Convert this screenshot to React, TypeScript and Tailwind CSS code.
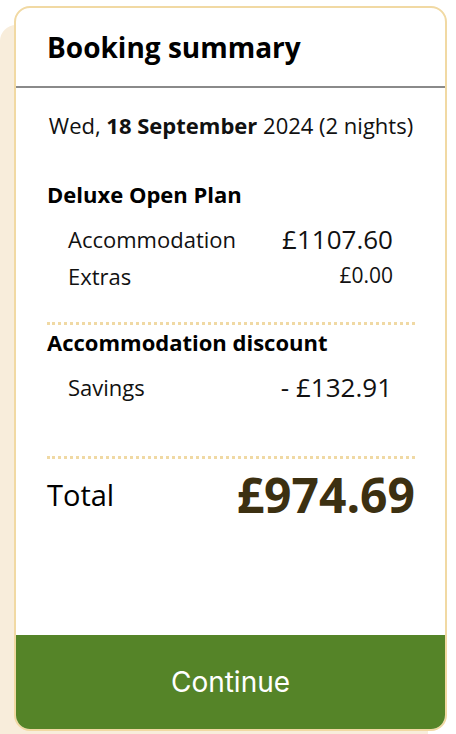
import React from 'react';

const font = { fontFamily: '"Open Sans", "Noto Sans", sans-serif' };

const Row: React.FC<{ label: string; value: string; valueClass: string; className?: string }> = ({ label, value, valueClass, className }) => (
  <div className={`flex items-center justify-between pl-[21px] pr-[22px] ${className ?? ''}`}>
    <span className="text-[22px] text-[#111]">{label}</span>
    <span className={`text-[#111] ${valueClass}`}>{value}</span>
  </div>
);

export default function App() {
  return (
    <div className="relative w-[456px] h-[734px] overflow-hidden bg-white" style={font}>
      {/* beige backdrop behind the card */}
      <div className="absolute left-0 top-[25px] bottom-0 w-[428px] rounded-tl-[16px] bg-[#f8eddb]" />

      <div className="relative ml-[14px] mt-[6px] w-[433px] h-[725px] flex flex-col overflow-hidden rounded-[16px] border-2 border-[#f1d9a3] bg-white">
        {/* Header */}
        <div className="h-[80px] flex items-center px-[31px] border-b-2 border-[#8a8a8a]">
          <h2 className="text-[28px] leading-[36px] font-bold text-black">Booking summary</h2>
        </div>

        <div className="flex-1 px-[31px] pr-[30px]">
          <p className="mt-[23px] text-[22px] leading-[28px] text-[#111] text-center whitespace-nowrap">
            Wed, <b>18 September</b> 2024 (2 nights)
          </p>

          <h3 className="mt-[41px] text-[22px] leading-[28px] font-bold text-black">Deluxe Open Plan</h3>
          <Row className="mt-[14px] h-[34px]" label="Accommodation" value="£1107.60" valueClass="text-[26px]" />
          <Row className="mt-[5px] h-[30px]" label="Extras" value="£0.00" valueClass="text-[21px]" />

          <div className="mt-[31px] border-t-[3px] border-dotted border-[#f0d9a4]" />

          <h3 className="mt-[3px] text-[22px] leading-[28px] font-bold text-black">Accommodation discount</h3>
          <Row className="mt-[14px] h-[34px]" label="Savings" value="- £132.91" valueClass="text-[26px] pr-[1px]" />

          <div className="mt-[52px] border-t-[3px] border-dotted border-[#f0d9a4]" />

          <div className="mt-[8px] h-[56px] flex items-center justify-between">
            <span className="text-[29px] text-black">Total</span>
            <span className="text-[48px] leading-[56px] font-bold text-[#3c3011]">£974.69</span>
          </div>
        </div>

        <button
          className="h-[94px] w-full bg-[#558428] text-white text-[28px]"
          style={{ fontFamily: 'Inter, "Liberation Sans", sans-serif' }}
        >
          Continue
        </button>
      </div>
    </div>
  );
}
